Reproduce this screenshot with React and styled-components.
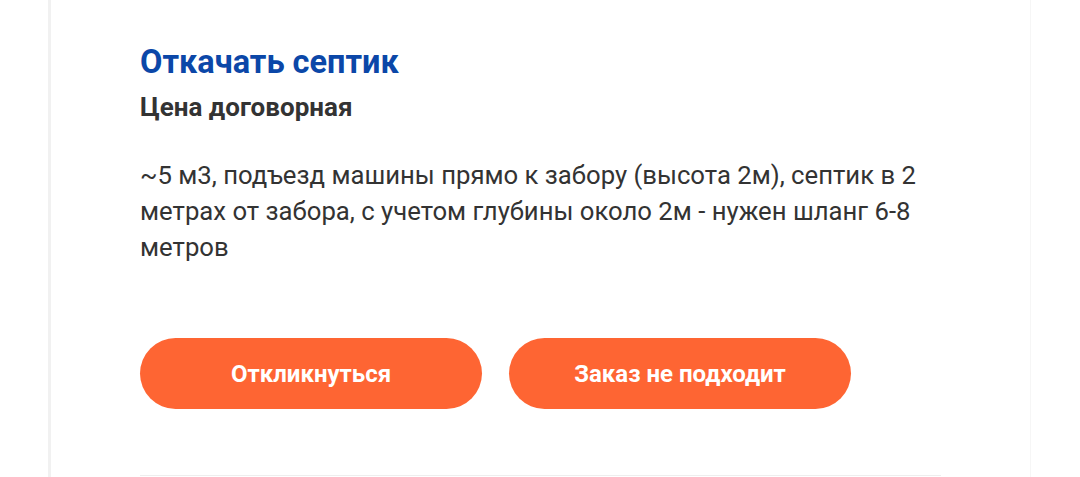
import React from "react";
import styled, { createGlobalStyle } from "styled-components";

const GlobalStyle = createGlobalStyle`
  html, body {
    margin: 0;
    padding: 0;
    background: #ffffff;
    font-family: Roboto, "Noto Sans", sans-serif;
  }
`;

const Page = styled.div`
  display: flex;
  justify-content: flex-start;
  padding-left: 48px;
  height: 477px;
  overflow: hidden;
`;

const Card = styled.div`
  width: 983px;
  box-sizing: border-box;
  border-left: 3px solid #f1f1f1;
  border-right: 1px solid #f6f6f6;
  padding: 0 89px 0 89px;
  display: flex;
  flex-direction: column;
`;

const Order = styled.div`
  padding-top: 42px;
  padding-bottom: 66px;
  border-bottom: 1px solid #eeeeee;
`;

const Title = styled.h2`
  margin: 0;
  color: #0b47a8;
  font-size: 32.5px;
  font-weight: 700;
  line-height: 40px;
`;

const Price = styled.div`
  margin-top: 9px;
  color: #333333;
  font-size: 26px;
  font-weight: 700;
  line-height: 32px;
`;

const Description = styled.p`
  margin: 34px 0 0;
  color: #333333;
  font-size: 25.7px;
  line-height: 36px;
  font-weight: 400;
`;

const Actions = styled.div`
  display: flex;
  gap: 27px;
  margin-top: 73px;
`;

const Button = styled.button`
  width: 342px;
  height: 71px;
  border: none;
  border-radius: 36px;
  background: #fe6533;
  color: #ffffff;
  font-family: Roboto, "Noto Sans", sans-serif;
  font-size: 24px;
  font-weight: 700;
  cursor: pointer;
`;

export default function App() {
  return (
    <>
      <GlobalStyle />
      <Page>
        <Card>
          <Order>
            <Title>Откачать септик</Title>
            <Price>Цена договорная</Price>
            <Description>
              ~5 м3, подъезд машины прямо к забору (высота 2м), септик в 2
              метрах от забора, с учетом глубины около 2м - нужен шланг 6-8
              метров
            </Description>
            <Actions>
              <Button>Откликнуться</Button>
              <Button>Заказ не подходит</Button>
            </Actions>
          </Order>
        </Card>
      </Page>
    </>
  );
}
